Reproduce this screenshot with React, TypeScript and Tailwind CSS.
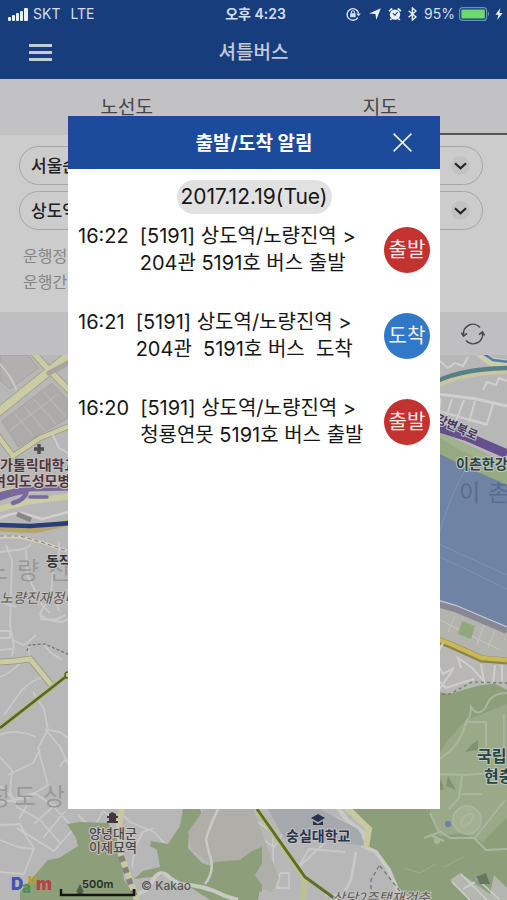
import React from "react";

type Notice = {
  time: string;
  route: string;
  detail: string;
  kind: "출발" | "도착";
};

const notices: Notice[] = [
  { time: "16:22", route: "[5191] 상도역/노량진역 >", detail: "204관 5191호 버스 출발", kind: "출발" },
  { time: "16:21", route: "[5191] 상도역/노량진역 >", detail: "204관  5191호 버스  도착", kind: "도착" },
  { time: "16:20", route: "[5191] 상도역/노량진역 >", detail: "청룡연못 5191호 버스 출발", kind: "출발" },
];

function StatusBar() {
  return (
    <div className="grid h-7 grid-cols-[1fr_auto_1fr] items-center pr-1 pl-2 leading-5 text-[#d3dff2]">
      <div className="flex items-center">
        <svg width="21" height="13" viewBox="0 0 21 13" fill="#e9f1fd" aria-hidden="true">
          <rect x="0" y="9" width="3" height="4" rx="1" />
          <rect x="4" y="7" width="3" height="6" rx="1" />
          <rect x="8" y="5" width="3" height="8" rx="1" />
          <rect x="12" y="3" width="3" height="10" rx="1" />
          <rect x="16" y="0" width="4" height="13" rx="1" />
        </svg>
        <span className="ml-1 text-sm">SKT</span>
        <span className="ml-[10px] text-sm">LTE</span>
      </div>
      <div className="text-sm font-semibold">오후 4:23</div>
      <div className="flex items-center justify-end gap-1">
        <svg width="15" height="14" viewBox="0 0 15 14" fill="none" stroke="#d3dff2" strokeWidth="1.4" aria-hidden="true">
          <path d="M11.8 10.6A5.8 5.8 0 1 1 12.6 6.4" />
          <path d="M10.2 6.4h4.6l-2.3 2.8z" fill="#d3dff2" stroke="none" />
          <rect x="4.2" y="6.2" width="5.4" height="4" fill="#d3dff2" stroke="none" />
          <path d="M5.4 6.4V5.2a1.5 1.5 0 0 1 3 0v1.2" strokeWidth="1.1" />
        </svg>
        <svg className="ml-1" width="12" height="12" viewBox="0 0 12 12" fill="#e9f1fd" aria-hidden="true">
          <path d="M11.8.2 7.4 11.8 6.4 6 .2 5.6z" />
        </svg>
        <svg className="ml-[3px]" width="14" height="14" viewBox="0 0 14 14" aria-hidden="true">
          <circle cx="7" cy="7.6" r="5.2" fill="#e9f1fd" />
          <path d="M1.2 4.2A9 9 0 0 1 4.3 1.6M12.8 4.2A9 9 0 0 0 9.7 1.6M3.4 11.6 2.2 13M10.6 11.6l1.2 1.4" stroke="#e9f1fd" strokeWidth="1.8" />
          <path d="M4.8 6.4 7 8.2 9.6 5" stroke="#183d7d" strokeWidth="1.1" fill="none" />
        </svg>
        <svg className="ml-[2px]" width="9" height="14" viewBox="0 0 9 14" fill="none" stroke="#e9f1fd" strokeWidth="1.4" aria-hidden="true">
          <path d="M.6 3.8 8 10 4.4 13V1L8 4 .6 10.2" />
        </svg>
        <span className="ml-[3px] text-sm">95%</span>
        <svg width="32" height="14" viewBox="0 0 32 14" aria-hidden="true">
          <rect x=".6" y=".6" width="27" height="12.8" rx="3" fill="none" stroke="#6d92b8" strokeWidth="1.2" />
          <rect x="2.4" y="2.4" width="23.4" height="9.2" rx="1" fill="#6ddb6c" />
          <path d="M29 4.6q2.2 2.4 0 4.8z" fill="#6d92b8" />
        </svg>
        <svg width="8" height="12" viewBox="0 0 8 12" fill="#e9f1fd" aria-hidden="true">
          <path d="M5.4 0 .4 6.8h3L2.2 12l5.4-7H4.4z" />
        </svg>
      </div>
    </div>
  );
}

function Header() {
  return (
    <header className="bg-[#183d7d]">
      <StatusBar />
      <div className="grid h-[51px] grid-cols-[1fr_auto_1fr] items-center px-7 pb-[2px]">
        <button type="button" aria-label="메뉴" className="flex w-[24px] flex-col gap-[4px] pl-px">
          <span className="h-[3px] bg-[#c3cad8]" />
          <span className="h-[3px] bg-[#c3cad8]" />
          <span className="h-[3px] bg-[#c3cad8]" />
        </button>
        <h1 className="text-[19px] leading-6 font-medium text-[#c3cad8]">셔틀버스</h1>
      </div>
    </header>
  );
}

function StopSelect({ label, value }: { label: string; value: string }) {
  return (
    <label className="relative block">
      <span className="sr-only">{label}</span>
      <select
        defaultValue={value}
        className="block h-[39px] w-full appearance-none rounded-full border border-[#a6a6a6] bg-transparent px-[11px] pt-[2px] text-[17px] font-medium text-[#222222]"
      >
        <option>{value}</option>
      </select>
      <span className="pointer-events-none absolute top-[10px] right-[13px] flex size-[19px] items-center justify-center rounded-full bg-[#c2c2c2]">
        <svg width="13" height="8" viewBox="0 0 13 8" fill="none" stroke="#252525" strokeWidth="2.2" aria-hidden="true">
          <path d="M1 1.2 6.5 6.2 12 1.2" />
        </svg>
      </span>
    </label>
  );
}

function MapView() {
  return (
    <svg
      className="absolute inset-0 h-full w-full"
      viewBox="0 355 507 545"
      preserveAspectRatio="xMidYMid slice"
      role="img"
      aria-label="지도"
    >
      <rect x="0" y="355" width="507" height="545" fill="#b8b7b7" />

      {/* city blocks, north west */}
      <g fill="#adabaa" stroke="#a19e9c" strokeWidth=".8">
        <path d="M2 421 52 383 68 400V418L18 447z" />
        <path d="M0 355H28L38 368 10 389 0 380z" fill="#b1b0af" />
      </g>
      <path d="M15 414 34 437M24 406 46 432M34 399 56 424M43 391 66 417M9 431 58 394" stroke="#b8b6b5" strokeWidth="1.2" />
      <g fill="none" strokeLinecap="round" strokeLinejoin="round">
        <g stroke="#9d9b78" strokeWidth="9">
          <path d="M-5 415 27 389 48 372 72 352" />
          <path d="M31 350 50 371 72 393" strokeWidth="7" />
          <path d="M-4 433 13 456M13 456 40 438 72 425" strokeWidth="6" />
        </g>
        <g stroke="#cbcba5">
          <path d="M-5 415 27 389 48 372 72 352" strokeWidth="7.5" />
          <path d="M31 350 50 371 72 393" strokeWidth="5.5" />
          <path d="M-4 433 13 456M13 456 40 438 72 425" strokeWidth="4.5" />
          <path d="M-4 494 25 490 72 484" strokeWidth="8" />
          <path d="M-4 510 26 502 72 496" strokeWidth="6" />
        </g>
        <path d="M49 373 68 363" stroke="#a7a3a0" strokeWidth="5" />
        <path d="M0 364Q12 377 16 389M52 433 59 448 68 453" stroke="#cdcdcd" strokeWidth="1.8" />
        <g stroke="#79699f">
          <path d="M-4 496Q14 490 31 489L72 488" strokeWidth="5" />
          <path d="M30 497H47" strokeWidth="3.5" />
          <path d="M-2 499Q14 493 27 491Q25 500 13 503" strokeWidth="4.5" />
        </g>
        <path d="M-4 520Q12 512 22 513L42 519 72 511" stroke="#d0d0ce" strokeWidth="2.5" />
        <path d="M17 514 31 520" stroke="#888588" strokeWidth="5" strokeLinecap="butt" />
        <path d="M-4 528Q20 530 36 530L72 522" stroke="#b5a568" strokeWidth="6" />
        <path d="M-4 525 30 526 72 523" stroke="#293d77" strokeWidth="4.5" />
        <path d="M-4 537H20L44 543 72 553" stroke="#d0d0bc" strokeWidth="3" />
        <path d="M0 536H20L44 543 72 553" stroke="#8b8984" strokeWidth="1.2" strokeDasharray="4 3" strokeLinecap="butt" />
      </g>

      {/* minor streets, west side */}
      <g fill="none" stroke="#c9c9c9" strokeWidth="1.8" strokeLinejoin="round">
        <path d="M6 545 12 560 10 625 14 646 12 656M0 552 24 549 31 545M26 550 27 574 42 605 50 613M59 541V554L53 567 51 595 40 614Q50 625 65 615M0 631H10V638H0M41 610V619L63 622 68 619M0 602 17 607M43 599 55 596 59 611" />
        <path d="M12 640 23 645 28 642 36 635M28 642 30 660M43 644 50 652 62 660M0 650 12 649M22 661Q10 674 0 677M45 676Q32 680 22 690L4 715M33 692 44 709 48 730 38 748 48 785 27 798 1 802M45 729 60 747 68 764M48 730 60 732 68 738M0 735Q15 728 36 737M0 757 12 770 10 792 17 807 40 820 60 843M8 775 33 763 40 749M0 786 14 799 34 793 51 804 68 822 78 838M19 819 27 805M17 828 54 851 75 827M34 824 56 804M43 838 65 811M0 825 20 824 27 838 34 848 24 874 0 872M0 840 18 847 33 849M60 767Q64 758 68 760" />
        <path d="M78 815 93 830 103 811M103 811 120 823M120 812 130 822 154 832 166 845M154 828 143 832 135 847 132 867M166 845 184 852" />
        <path d="M250 830 274 847 285 830M250 816 273 833 273 890M285 849 299 866 309 849 345 852M300 866Q317 850 325 843M280 873H289V888H277L280 873" />
      </g>
      <path d="M27 651 29 645 45 644 72 656" fill="none" stroke="#777573" strokeWidth="1.3" strokeDasharray="3 2" />
      <path d="M0 662 15 661 30 659 53 687" fill="none" stroke="#98966f" strokeWidth="6.5" />
      <path d="M0 662 15 661 30 659 53 687" fill="none" stroke="#cbcba8" strokeWidth="5" />
      <path d="M0 728 68 675" stroke="#b9ba94" strokeWidth="6" />
      <path d="M0 728 68 675" stroke="#556720" strokeWidth="2.6" />
      <circle cx="68" cy="675" r="3" fill="#c8c9ad" stroke="#556720" strokeWidth="1.5" />

      {/* parks, south */}
      <g fill="#8c9f7a">
        <path d="M67 824 80 822 108 823 119 838 124 880 138 900H20V892L48 860 59 858 78 846 76 838z" />
        <path d="M183 809H200L205 825 189 832 188 848 202 863 215 867 218 861 238 859 252 850 263 850 262 880 258 900H210L185 884 168 875 134 879 143 871 160 867 157 850 150 846 151 841 168 844 180 826z" />
        <path d="M345 805 368 833 367 846 381 856 395 882 405 900H507V690L480 676 430 696V805z" />
      </g>
      <path d="M188 832 204 809H253L279 878 272 892 243 882 211 874 208 862 192 850z" fill="#afaea9" />
      <path d="M215 862 240 860 252 851 262 847V863L255 875 262 885V892L243 884 212 875 206 868z" fill="#8c9f7a" />
      <g fill="none" stroke="#c9cac5" strokeWidth="2.5">
        <path d="M218 809Q211 823 206 839L209 853Q216 870 205 884" />
        <path d="M134 895Q148 892 153 880Q160 868 169 877L178 884Q205 885 225 896L238 900" strokeWidth="4" />
        <path d="M338 808 347 820 364 833 363 846 376 852 389 870 397 889 407 899" strokeWidth="4" />
        <path d="M336 817 360 832M356 852 351 880 342 896 325 895" />
      </g>
      <path d="M122 809 119 824 121 855 137 900" fill="none" stroke="#c8c9a1" strokeWidth="6" />
      <path d="M121 856 136 900" fill="none" stroke="#858282" strokeWidth="6" strokeDasharray="6 6" />
      <path d="M268 809 320 809 358 829 366 846 332 842 284 838z" fill="#a5a9ad" />
      <path d="M344 805 369 829 366 848" fill="none" stroke="#c8c9a1" strokeWidth="6" />
      <path d="M257 809 305 879 302 900" fill="none" stroke="#bdc095" strokeWidth="6" />
      <path d="M257 809 305 877 334 898" fill="none" stroke="#5e6e24" strokeWidth="3" />
      <path d="M379 866 371 880 371 900M380 866 402 894" fill="none" stroke="#767672" strokeWidth="1.3" strokeDasharray="4 3" />

      {/* river, north east */}
      <path d="M430 427 507 463V496L430 458z" fill="#a1b28f" />
      <path d="M430 449 462 461 507 481V645L485 637 430 610z" fill="#6f83a5" />
      <path d="M430 449 462 465 507 485V472L460 450 430 432z" fill="#95aa83" />
      <path d="M467 467Q450 495 439 534M430 540 507 575M430 552 507 589" fill="none" stroke="#8293ad" strokeWidth="1" />
      <path d="M430 427 507 451" stroke="#aaa9aa" strokeWidth="5" />
      <path d="M430 425 468 437 507 454" fill="none" stroke="#64508d" strokeWidth="9" />
      <g fill="none" stroke="#cecfce" strokeWidth="2">
        <path d="M430 393 477 399 507 406" strokeWidth="3" />
        <path d="M441 398 439 412M452 399 446 418M464 400 456 421M475 401 469 422M493 404 487 424 468 419M439 411 487 425M430 353 448 368 455 363 463 366 468 357M483 390 487 382 496 385 499 378 507 381" />
      </g>
      <path d="M476 350 492 362 510 364" fill="none" stroke="#cecda8" strokeWidth="9" />
      <path d="M478 350 493 360 510 362" fill="none" stroke="#4d7fb0" strokeWidth="2.5" />
      <path d="M428 389Q455 371 507 370" fill="none" stroke="#c9c6a1" strokeWidth="8" />
      <path d="M428 386Q455 369 507 368" fill="none" stroke="#568086" strokeWidth="4.5" />
      <path d="M430 601 460 610 507 631V658L475 655 430 636z" fill="#b4b4ae" />
      <path d="M430 602 455 609 507 631" fill="none" stroke="#898793" strokeWidth="6" />
      <path d="M430 598 455 605 507 627" fill="none" stroke="#c7c9cf" strokeWidth="1.3" />
      <path d="M440 620 500 650M455 616 448 632M484 625 477 644M495 630 488 648" fill="none" stroke="#c5c5c0" strokeWidth="1" />
      <path d="M462 621 475 626 471 639 458 634z" fill="#91a77d" />
      <path d="M430 637 455 647 486 660 507 661V682L477 686 450 694 430 691z" fill="#b8b7b6" />
      <path d="M430 637 453 646 482 659 507 661" fill="none" stroke="#898547" strokeWidth="7" />
      <path d="M430 636 453 645 482 658 507 660" fill="none" stroke="#c8b955" strokeWidth="4.5" />
      <path d="M430 672 446 688 461 683 474 679M435 660 443 674 454 668 439 690M481 664 484 681 471 667 458 658 461 668M495 665 493 683M502 665V681M443 643 436 657" fill="none" stroke="#cecece" strokeWidth="2" />
      <path d="M430 694 450 694 472 682 507 683" fill="none" stroke="#777e6a" strokeWidth="1.4" strokeDasharray="3 3" />

      {/* national cemetery grounds */}
      <path d="M466 720 507 704V817L483 842 462 833 440 836 430 812V766L448 740z" fill="#9aaa88" />
      <g fill="none" stroke="#abb6a0" strokeWidth="2">
        <path d="M507 693Q490 693 486 707Q478 718 471 707L470 716 466 722Q462 740 449 752L430 766M466 722H486V747M504 714V760M430 795Q430 779 440 774L465 775 490 773 507 769M462 776 459 798 449 809M462 794H482M430 813 438 830 450 838 475 838 505 800M474 838 486 850 507 849" />
        <ellipse cx="467" cy="820" rx="14" ry="14" fill="#a4b092" />
        <ellipse cx="467" cy="820" rx="4" ry="8" transform="rotate(45 467 820)" />
      </g>
      <path d="M471 745 478 740V750L465 752zM448 776 456 790 446 786zM441 778 444 790 439 790z" fill="#7f936f" />
      <path d="M444 841 430 835M424 838 440 832" stroke="#abb6a0" strokeWidth="2" />
      <circle cx="437" cy="841" r="3" fill="#abb6a0" />
      <circle cx="448" cy="824" r="3" fill="#717cab" />
      <path d="M450 880 460 873 490 894 494 875 507 888V900H470z" fill="#b3b7b0" />
      <path d="M452 882 470 900M461 874 487 900M476 878 499 899M463 889 475 882" stroke="#cccfca" strokeWidth="1.5" />
      <path d="M476 877 486 873 490 884 480 884z" fill="#64775f" />
      <path d="M404 868 420 873 436 864M444 867 465 856" fill="none" stroke="#9dac90" strokeWidth="1" />

      {/* map labels */}
      <g className="font-['Noto_Sans_CJK_KR',sans-serif]">
        <g fill="#98979a" fontSize="24">
          <text x="-14" y="579">노</text>
          <text x="17" y="579">량</text>
          <text x="48" y="579">진</text>
          <text x="-12" y="805">성</text>
          <text x="14" y="805">도</text>
          <text x="43" y="805">상</text>
        </g>
        <g fill="#586c8f" fontSize="23">
          <text x="459" y="501">이</text>
          <text x="488" y="501">촌</text>
        </g>
        <g stroke="#c4c4c4" strokeWidth="2" paintOrder="stroke" strokeLinejoin="round">
          <g fill="#51353d" fontSize="14" fontWeight="700">
            <text x="0" y="470">가톨릭대학교</text>
            <text x="-7" y="486">여의도성모병원</text>
          </g>
          <text x="46" y="566" fontSize="14" fontWeight="700" fill="#343434">동작구</text>
          <text x="0" y="603" fontSize="14" fontStyle="italic" fill="#605853">노량진재정비</text>
          <text x="89" y="838" fontSize="13" fontWeight="500" fill="#4b4547">양녕대군</text>
          <text x="89" y="852" fontSize="13" fontWeight="500" fill="#4b4547">이제묘역</text>
          <text x="286" y="841" fontSize="14" fontWeight="700" fill="#29334b">숭실대학교</text>
          <text x="332" y="903" fontSize="14" fontStyle="italic" fill="#605853">상당2주택재건축</text>
          <text x="456" y="469" fontSize="14" fontWeight="700" fill="#26463f">이촌한강공원</text>
          <text x="477" y="762" fontSize="16" fontWeight="700" fill="#26463f">국립</text>
          <text x="484" y="782" fontSize="16" fontWeight="700" fill="#26463f">현충원</text>
          <text x="435" y="422" fontSize="12" fontWeight="700" fill="#48355f" transform="rotate(24 435 422)">강변북로</text>
        </g>
      </g>
      <path d="M39 444V454M34 449H44" stroke="#504c50" strokeWidth="3.4" />
      <path d="M109 814 112 812 116 814V816H118V818H116V821H118V823H107V821H109V818H107V816H109z" fill="#45383c" />
      <path d="M311 818 318 814 325 818 318 822zM313 821 318 824 323 821V825H313z" fill="#29334b" />
      <path d="M80 884 76 892H78L75 896H85L82 892H84z" fill="#4f6048" />

      {/* provider mark, scale and credit */}
      <g className="font-['Inter',sans-serif]">
        <g fontSize="17" fontWeight="900">
          <text x="11" y="890" fill="#4057ad">D</text>
          <text x="22" y="893" fontSize="15" fill="#578c51">a</text>
          <text x="28" y="884" fontSize="13" fill="#c1982f">u</text>
          <text x="36" y="890" fill="#b94147">m</text>
        </g>
        <text x="82" y="888" fontSize="11" fontWeight="600" fill="#282a27">500m</text>
        <text x="141" y="890" fontSize="12" fontWeight="500" fill="#555856">© Kakao</text>
      </g>
      <path d="M61 889V895H134V889" fill="none" stroke="#161616" strokeWidth="2.4" />
    </svg>
  );
}

function NoticeRow({ notice }: { notice: Notice }) {
  return (
    <li className="flex items-center justify-between">
      <div className="flex gap-[11px] text-[20px] leading-[27px] whitespace-pre text-[#161616]">
        <time>{notice.time}</time>
        <p>
          {notice.route}
          <br />
          {notice.detail}
        </p>
      </div>
      <span
        className={`flex size-[46px] shrink-0 items-center justify-center rounded-full text-[20px] leading-6 text-[#fbeef0] ${
          notice.kind === "출발" ? "bg-[#c2332f]" : "bg-[#3078c8]"
        }`}
      >
        {notice.kind}
      </span>
    </li>
  );
}

function NoticeDialog() {
  return (
    <section
      role="dialog"
      aria-labelledby="notice-title"
      className="absolute top-[116px] right-[67px] bottom-[91px] left-[68px] overflow-hidden bg-white"
    >
      <div className="grid h-[53px] grid-cols-[1fr_auto_1fr] items-center bg-[#1d4b9b] px-7">
        <h2 id="notice-title" className="col-start-2 pt-[2px] text-[19px] leading-6 font-bold text-white">
          출발/도착 알림
        </h2>
        <button type="button" aria-label="닫기" className="justify-self-end">
          <svg width="19" height="19" viewBox="0 0 19 19" fill="none" stroke="#eaf2ff" strokeWidth="1.5" aria-hidden="true">
            <path d="M.6.6 18.4 18.4M18.4.6.6 18.4" />
          </svg>
        </button>
      </div>
      <div className="flex flex-col pt-[11px] pr-[10px] pl-[10px]">
        <div className="flex h-[34px] w-[155px] items-center justify-center self-center rounded-full bg-[#e1e1e1] text-[21px] leading-6 text-[#161616]">
          2017.12.19(Tue)
        </div>
        <ul className="mt-[9px] flex flex-col gap-8">
          {notices.map((notice) => (
            <NoticeRow key={notice.time} notice={notice} />
          ))}
        </ul>
      </div>
    </section>
  );
}

export default function App() {
  return (
    <div className="relative flex min-h-screen flex-col overflow-hidden bg-[#cccccc] font-['Inter','Noto_Sans_CJK_KR',sans-serif]">
      <Header />
      <nav className="grid grid-cols-2 bg-[#c2c2c4] text-[19px] leading-6 text-[#454545]">
        <a href="#routes" className="flex h-14 items-center justify-center border-b-2 border-transparent pt-1">
          노선도
        </a>
        <a href="#map" className="flex h-14 items-center justify-center border-b-2 border-[#555555] pt-1">
          지도
        </a>
      </nav>
      <div className="flex flex-col gap-[6px] pt-[11px] pr-6 pb-[17px] pl-[19px]">
        <StopSelect label="노선" value="서울순환" />
        <StopSelect label="정류장" value="상도역" />
        <div className="pt-[7px] pl-1 text-base leading-[26px] text-[#858585]">
          <p>운행정보</p>
          <p>운행간격</p>
        </div>
      </div>
      <div className="flex h-[43px] items-center justify-end bg-[#bfbfc1] pr-[22px]">
        <button type="button" aria-label="새로고침">
          <svg width="24" height="24" viewBox="0 0 24 24" fill="none" stroke="#4a4a4c" strokeWidth="1.6" aria-hidden="true">
            <path d="M2.6 13.5A9.4 9.4 0 0 1 19 5.6M21.4 10.5A9.4 9.4 0 0 1 5 18.4" />
            <path d="M.4 10.6 2.6 14 6 11.4M18 12.6 21.4 10 23.6 13.4" />
          </svg>
        </button>
      </div>
      <main className="relative flex-1 overflow-hidden">
        <MapView />
      </main>
      <NoticeDialog />
    </div>
  );
}
